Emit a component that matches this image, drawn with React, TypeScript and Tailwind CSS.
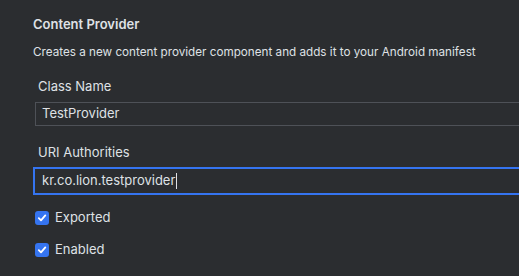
import React from "react";

function Check() {
  return (
    <div className="w-[14px] h-[14px] rounded-[3px] bg-[#3574f0] flex items-center justify-center">
      <svg width="10" height="10" viewBox="0 0 10 10" fill="none">
        <path d="M1.8 5.2 L4 7.4 L8.3 2.4" stroke="#ffffff" strokeWidth="1.8" strokeLinecap="round" strokeLinejoin="round" />
      </svg>
    </div>
  );
}

export default function App() {
  return (
    <div
      className="w-[519px] h-[276px] overflow-hidden bg-[#2b2d30] text-[#dfe1e5] pl-[33px] pt-[14px] flex flex-col"
      style={{ fontFamily: "Inter, 'Noto Sans', sans-serif" }}
    >
      <div className="text-[13px] leading-[20px] font-semibold">Content Provider</div>
      <div className="mt-[9px] text-[11.7px] leading-[18px] whitespace-nowrap">
        Creates a new content provider component and adds it to your Android manifest
      </div>
      <div className="mt-[16px] ml-[5px] text-[13px] leading-[18px]">Class Name</div>
      <div className="mt-[7px] ml-[2px] w-[520px] h-[24px] border border-[#4e5157] flex items-center pl-[6px] text-[13px]">
        TestProvider
      </div>
      <div className="mt-[17px] ml-[5px] text-[13px] leading-[18px]">URI Authorities</div>
      <div className="mt-[6px] w-[520px] h-[28px] border-2 border-[#3574f0] flex items-center pl-[7px] text-[13px]">
        <span>kr.co.lion.testprovider</span>
        <span className="w-px h-[16px] bg-[#dfe1e5] ml-px" />
      </div>
      <div className="mt-[14px] ml-[2px] flex items-center gap-[6px] h-[18px] text-[13px]">
        <Check />
        <span>Exported</span>
      </div>
      <div className="mt-[14px] ml-[2px] flex items-center gap-[6px] h-[18px] text-[13px]">
        <Check />
        <span>Enabled</span>
      </div>
    </div>
  );
}
